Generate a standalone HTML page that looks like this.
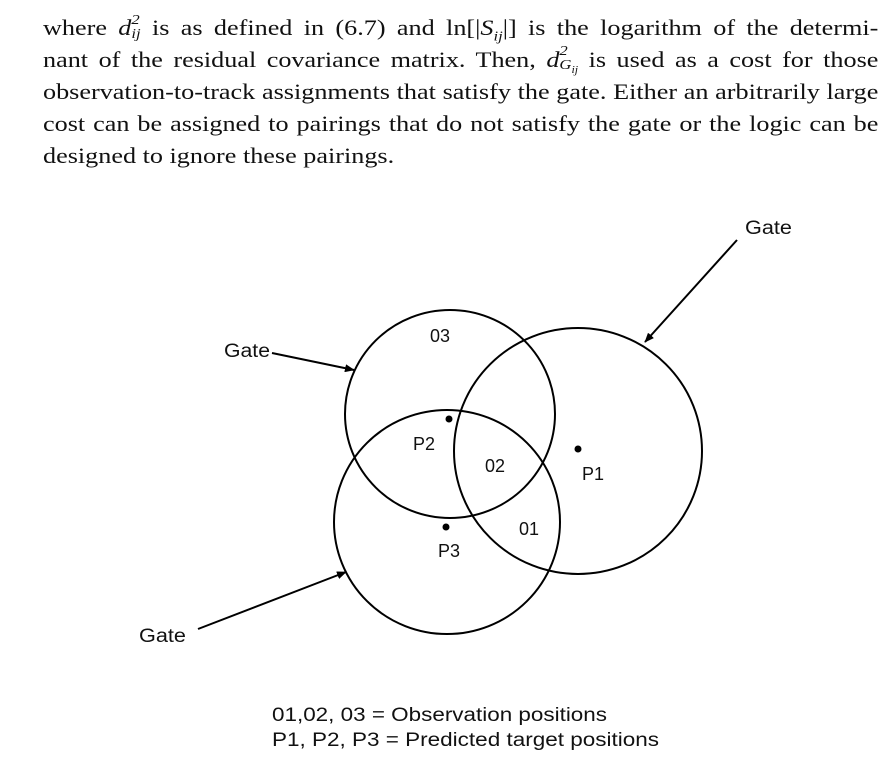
<!DOCTYPE html>
<html><head><meta charset="utf-8"><style>
html,body{margin:0;padding:0;background:#fff;width:887px;height:764px;overflow:hidden}
.l{position:absolute;left:43px;width:702px;font-family:"Liberation Serif",serif;font-size:22px;color:#111;line-height:32px;text-align:justify;text-align-last:justify;white-space:nowrap;transform:scaleX(1.19);transform-origin:0 0}
.l.last{text-align-last:left;width:auto}
.m{font-style:italic;position:relative}
.ss{display:inline-block;vertical-align:middle;line-height:1;font-size:14px;font-style:italic;position:relative;top:-2px}
.ss span{display:block}
svg{position:absolute;left:0;top:0}
</style></head><body>
<div class="l" style="top:12px">where <span class="m">d</span><span class="ss"><span>2</span><span>ij</span></span> is as defined in (6.7) and ln[|<span class="m">S</span><sub style="font-size:14px;font-style:italic">ij</sub>|] is the logarithm of the determi-</div>
<div class="l" style="top:44px">nant of the residual covariance matrix. Then, <span class="m">d</span><span class="ss"><span>2</span><span>G<sub style="font-size:10px">ij</sub></span></span> is used as a cost for those</div>
<div class="l" style="top:76px">observation-to-track assignments that satisfy the gate. Either an arbitrarily large</div>
<div class="l" style="top:108px">cost can be assigned to pairings that do not satisfy the gate or the logic can be</div>
<div class="l last" style="top:140px">designed to ignore these pairings.</div>
<svg width="887" height="764" viewBox="0 0 887 764">
<defs><marker id="a" markerWidth="10" markerHeight="8" refX="9" refY="4" orient="auto" markerUnits="userSpaceOnUse"><path d="M0,0 L14,4 L0,8 z" fill="#000" transform="scale(0.7,1)"/></marker></defs>
<g fill="none" stroke="#000" stroke-width="2">
<ellipse cx="450" cy="414" rx="105" ry="104"/>
<ellipse cx="447" cy="522" rx="113" ry="112"/>
<ellipse cx="578" cy="451" rx="124" ry="123"/>
<line x1="272" y1="353" x2="354" y2="370" marker-end="url(#a)"/>
<line x1="737" y1="240" x2="645" y2="342" marker-end="url(#a)"/>
<line x1="198" y1="629" x2="346" y2="572" marker-end="url(#a)"/>
</g>
<g fill="#000">
<circle cx="449" cy="419" r="3.5"/><circle cx="578" cy="449" r="3.5"/><circle cx="446" cy="527" r="3.5"/>
</g>
<g font-family="Liberation Sans, sans-serif" font-size="18" fill="#111" text-anchor="middle">
<text x="440" y="342">03</text>
<text x="424" y="450">P2</text>
<text x="495" y="472">02</text>
<text x="593" y="480">P1</text>
<text x="529" y="535">01</text>
<text x="449" y="557">P3</text>
</g>
<g font-family="Liberation Sans, sans-serif" font-size="19" fill="#111">
<text x="745" y="234" textLength="47" lengthAdjust="spacingAndGlyphs">Gate</text>
<text x="224" y="357" textLength="46" lengthAdjust="spacingAndGlyphs">Gate</text>
<text x="139" y="642" textLength="47" lengthAdjust="spacingAndGlyphs">Gate</text>
</g>
<g font-family="Liberation Sans, sans-serif" font-size="19" fill="#111">
<text x="272" y="721" textLength="335" lengthAdjust="spacingAndGlyphs">01,02, 03 = Observation positions</text>
<text x="272" y="746" textLength="387" lengthAdjust="spacingAndGlyphs">P1, P2, P3 = Predicted target positions</text>
</g>
</svg>
</body></html>
